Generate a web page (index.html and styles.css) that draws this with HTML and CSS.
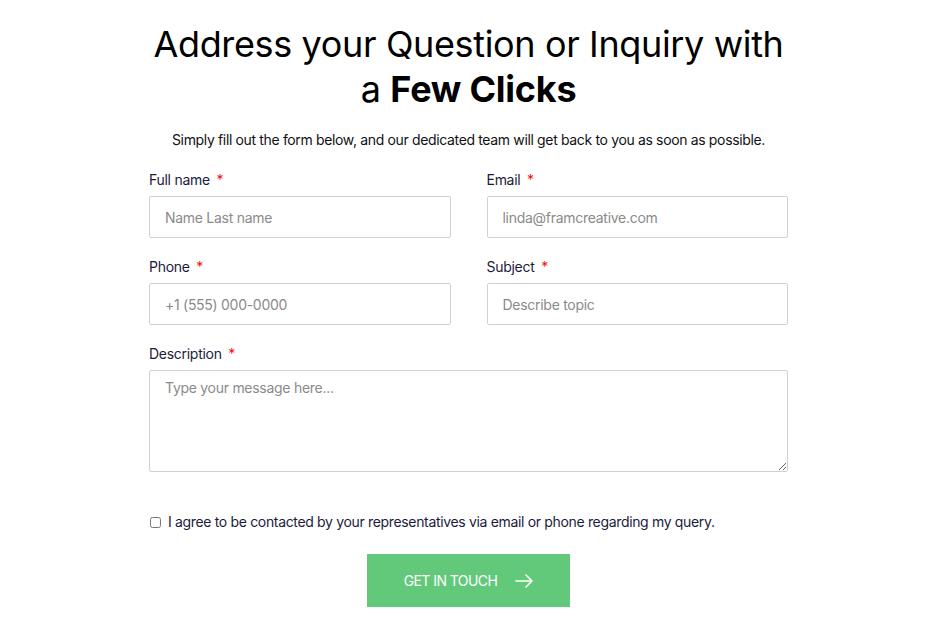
FILE: index.html
```html
<!DOCTYPE html>
<html lang="en">
<head>
<meta charset="utf-8">
<title>Contact</title>
<link rel="stylesheet" href="styles.css">
</head>
<body>
<main class="page">
  <section class="contact">
    <h1 class="title">Address your Question or Inquiry with<br>a <strong>Few Clicks</strong></h1>
    <p class="lead">Simply fill out the form below, and our dedicated team will get back to you as soon as possible.</p>
    <form class="form">
      <div class="grid">
        <div class="field">
          <label class="label">Full name <span class="req">*</span></label>
          <input class="input" type="text" placeholder="Name Last name">
        </div>
        <div class="field">
          <label class="label">Email <span class="req">*</span></label>
          <input class="input" type="email" placeholder="linda@framcreative.com">
        </div>
        <div class="field">
          <label class="label">Phone <span class="req">*</span></label>
          <input class="input" type="tel" placeholder="+1 (555) 000-0000">
        </div>
        <div class="field">
          <label class="label">Subject <span class="req">*</span></label>
          <input class="input" type="text" placeholder="Describe topic">
        </div>
        <div class="field wide">
          <label class="label">Description <span class="req">*</span></label>
          <textarea class="input area" placeholder="Type your message here..."></textarea>
        </div>
      </div>
      <label class="agree"><input type="checkbox" class="check"> <span>I agree to be contacted by your representatives via email or phone regarding my query.</span></label>
      <div class="actions">
        <button type="button" class="btn">GET IN TOUCH
          <svg class="arrow" width="18" height="14" viewBox="0 0 18 14" fill="none" stroke="#fff" stroke-width="1.6" stroke-linecap="round" stroke-linejoin="round"><path d="M1 7h16M11 1l6 6-6 6"/></svg>
        </button>
      </div>
    </form>
  </section>
</main>
</body>
</html>
```
FILE: styles.css
```css
* { box-sizing: border-box; }
html, body { margin: 0; padding: 0; background: #fff; }
body {
  font-family: Inter, "Noto Sans", sans-serif;
  color: #1b1b3a;
}
.page {
  padding-right: 10px;
}
.contact {
  width: 639px;
  margin: 0 auto;
  padding-top: 22px;
}
.title {
  margin: 0;
  text-align: center;
  font-size: 36px;
  line-height: 45px;
  font-weight: 400;
  letter-spacing: -0.01em;
  color: #000;
}
.title strong { font-weight: 700; letter-spacing: -0.007em; }
.lead {
  margin: 18px 0 0;
  text-align: center;
  font-size: 14px;
  line-height: 20px;
  letter-spacing: -0.025em;
  color: #111;
}
.form { margin-top: 22px; }
.grid {
  display: grid;
  grid-template-columns: 1fr 1fr;
  column-gap: 36px;
  row-gap: 21px;
}
.field { display: flex; flex-direction: column; }
.wide { grid-column: 1 / -1; }
.label {
  font-size: 14px;
  line-height: 16px;
  margin-bottom: 8px;
  letter-spacing: -0.02em;
  color: #1b1b3a;
}
.req { color: #f20f0f; margin-left: 3px; }
.input {
  height: 42px;
  border: 1px solid #cfcfd8;
  border-radius: 2px;
  padding: 0 15px;
  font-family: inherit;
  font-size: 14px;
  letter-spacing: -0.02em;
  color: #333;
  background: #fff;
  outline: none;
}
.input::placeholder { color: #8a8a8a; }
.area {
  height: 102px;
  padding: 8px 15px;
  resize: vertical;
}
.agree {
  display: flex;
  align-items: center;
  margin-top: 41px;
  font-size: 14px;
  line-height: 18px;
  letter-spacing: -0.024em;
  color: #1b1b3a;
}
.check {
  width: 11px;
  height: 11px;
  margin: 0 7px 0 1px;
}
.actions {
  display: flex;
  justify-content: center;
  margin-top: 23px;
}
.btn {
  width: 203px;
  height: 53px;
  border: 0;
  border-radius: 0;
  background: #62c97b;
  color: #fff;
  font-family: inherit;
  font-size: 14px;
  letter-spacing: -0.04em;
  display: flex;
  align-items: center;
  justify-content: center;
  gap: 18px;
  padding: 0;
}
.arrow { display: block; }
```
